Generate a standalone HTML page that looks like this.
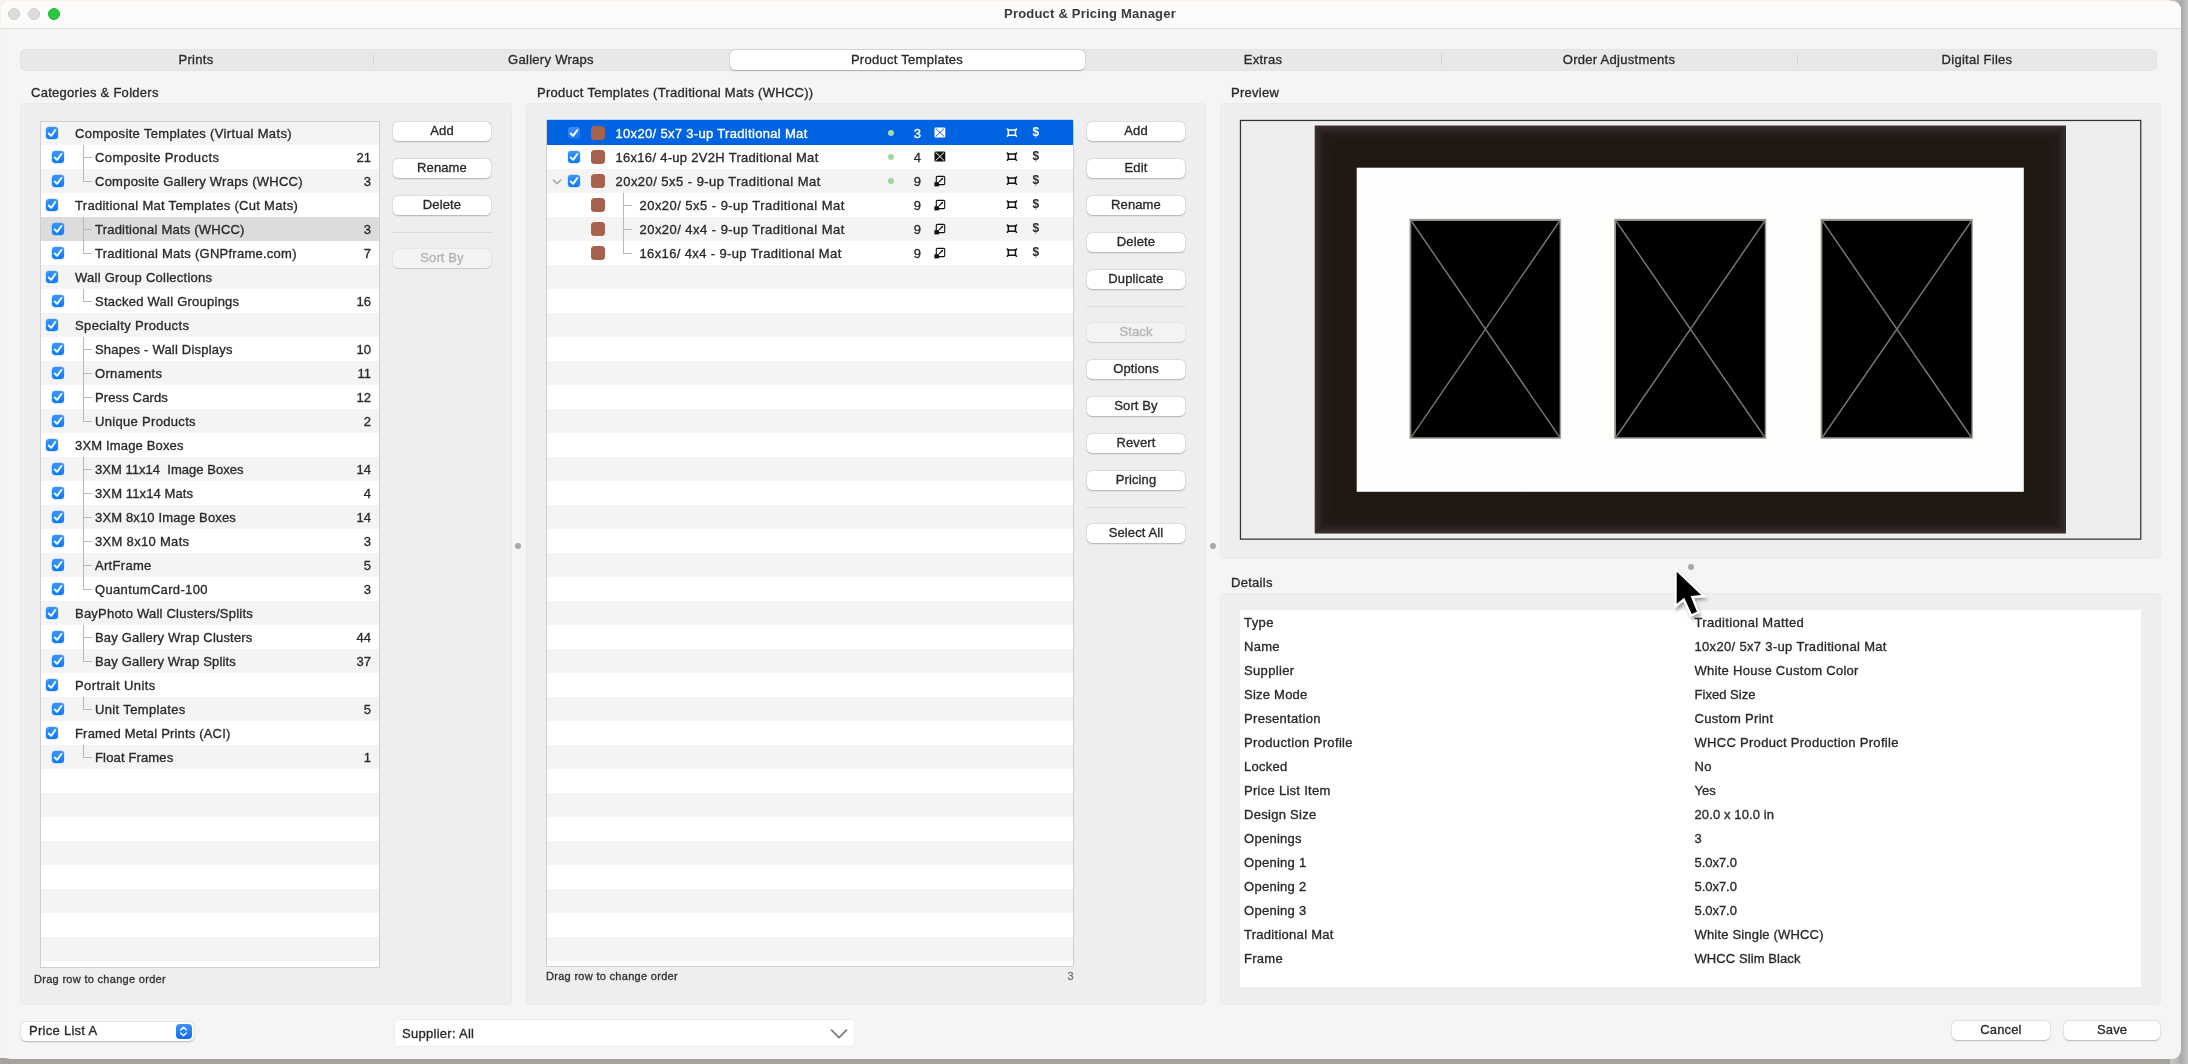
<!DOCTYPE html><html lang="en"><head><meta charset="utf-8"><title>Product &amp; Pricing Manager</title><style>
*{box-sizing:border-box;margin:0;padding:0}
html,body{width:2188px;height:1064px;overflow:hidden}
body{position:relative;background:#a5a19d;font-family:"Liberation Sans","DejaVu Sans",sans-serif;font-size:13px;color:#2a2a2a;letter-spacing:.28px;-webkit-font-smoothing:antialiased;-webkit-text-stroke:.33px currentColor}
.abs{position:absolute}
svg{display:block}
#bgR{left:2170px;top:0;width:18px;height:1064px;background:linear-gradient(90deg,#c9c7c5 0,#bdbcbb 7px,#a8a8a8 11px,#adadad 12px,#c6c6c6 18px)}
#bgT{left:0;top:0;width:2188px;height:12px;background:#faf3ed}
#bgL{left:0;top:0;width:12px;height:1058px;background:#faf1ea}
#win{will-change:transform;left:1px;top:1px;width:2180px;height:1058px;background:#f5f5f5;border-radius:9px;overflow:hidden}
#tbar{left:0;top:0;width:2180px;height:28px;background:linear-gradient(#fdfcfa,#fbfbfa);border-bottom:1px solid #dedede}
.tl{width:12px;height:12px;border-radius:50%;background:#dcdcdc;border:.5px solid #cfcfcf;top:8px}
#title{left:0;top:0;width:2180px;height:27px;line-height:26px;text-align:center;font-weight:700;color:#3a3a3a;letter-spacing:.2px;-webkit-text-stroke:0;padding-left:0}
.t{white-space:nowrap;line-height:16px;height:16px}
.gb{background:#eeeeee;border-radius:5px;box-shadow:0 0 0 .5px #e6e6e6 inset}
.btn{height:19px;border-radius:5px;background:#fff;box-shadow:0 .5px 1.6px rgba(0,0,0,.24),0 0 0 .5px rgba(0,0,0,.05);text-align:center;line-height:18.4px;white-space:nowrap;letter-spacing:.12px}
.btn.dis{background:#f3f3f3;color:#b4b4b4;box-shadow:0 .5px 1px rgba(0,0,0,.14),0 0 0 .5px rgba(0,0,0,.04)}
.sep{height:1px;background:#dcdcdc}
.list{background:#fff;border:1px solid #cfcfcf;overflow:hidden}
.row{left:0;height:24px}
.g{background:#f4f4f4}
.cb{width:12px;height:12px;border-radius:3px;background:linear-gradient(#3a94f8,#0b7bff);box-shadow:0 0 0 .4px rgba(0,90,200,.3)}
.cb svg{position:absolute;left:0;top:0}
.sw{width:14px;height:14px;border-radius:3.5px;background:#a6624d}
.ln{background:#b9b9b9}
.num{text-align:right;letter-spacing:0}
.sm{font-size:11px;letter-spacing:.3px;color:#333}
</style></head><body>
<div class="abs" id="bgT"></div><div class="abs" id="bgL"></div><div class="abs" id="bgR"></div>
<div class="abs" id="win">
<div class="abs" style="left:-1px;top:-1px;width:2188px;height:1064px">
<div class="abs" id="tbar" style="left:1px;top:1px"></div>
<div class="abs tl" style="left:8px"></div><div class="abs tl" style="left:28px"></div><div class="abs tl" style="left:48px;background:#28c840;border-color:#1fb636"></div>
<div class="abs" id="title" style="left:0;top:1px;width:2180px">Product &amp; Pricing Manager</div>
<div class="abs" style="left:20px;top:49px;width:2137px;height:21.5px;background:#e8e8e8;border-radius:6px;box-shadow:0 0 0 .5px #e0e0e0 inset"></div>
<div class="abs" style="left:730px;top:50px;width:354.8px;height:19.5px;background:#fff;border-radius:5px;box-shadow:0 .5px 1.5px rgba(0,0,0,.25),0 0 0 .5px rgba(0,0,0,.05)"></div>
<div class="abs" style="left:373px;top:54px;width:1px;height:11px;background:#d4d4d4"></div>
<div class="abs" style="left:1441px;top:54px;width:1px;height:11px;background:#d4d4d4"></div>
<div class="abs" style="left:1797px;top:54px;width:1px;height:11px;background:#d4d4d4"></div>
<div class="abs t " style="left:46px;top:51.5px;width:300px;text-align:center">Prints</div>
<div class="abs t " style="left:401px;top:51.5px;width:300px;text-align:center">Gallery Wraps</div>
<div class="abs t " style="left:757px;top:51.5px;width:300px;text-align:center">Product Templates</div>
<div class="abs t " style="left:1113px;top:51.5px;width:300px;text-align:center">Extras</div>
<div class="abs t " style="left:1469px;top:51.5px;width:300px;text-align:center">Order Adjustments</div>
<div class="abs t " style="left:1827px;top:51.5px;width:300px;text-align:center">Digital Files</div>
<div class="abs t " style="left:31px;top:85px;">Categories &amp; Folders</div>
<div class="abs t " style="left:537px;top:85px;">Product Templates (Traditional Mats (WHCC))</div>
<div class="abs t " style="left:1231px;top:85px;">Preview</div>
<div class="abs t " style="left:1231px;top:575px;">Details</div>
<div class="abs gb" style="left:20px;top:103px;width:491.5px;height:902px"></div>
<div class="abs gb" style="left:526px;top:103px;width:680px;height:902px"></div>
<div class="abs gb" style="left:1220px;top:103px;width:941px;height:455.5px"></div>
<div class="abs gb" style="left:1220px;top:593px;width:941px;height:412px"></div>
<div class="abs list" style="left:40px;top:120.5px;width:339.5px;height:847px">
<div class="abs row g" style="top:-0.5px;width:339.5px"></div>
<div class="abs row g" style="top:47.5px;width:339.5px"></div>
<div class="abs row g" style="top:95.5px;width:339.5px"></div>
<div class="abs row g" style="top:143.5px;width:339.5px"></div>
<div class="abs row g" style="top:191.5px;width:339.5px"></div>
<div class="abs row g" style="top:239.5px;width:339.5px"></div>
<div class="abs row g" style="top:287.5px;width:339.5px"></div>
<div class="abs row g" style="top:335.5px;width:339.5px"></div>
<div class="abs row g" style="top:383.5px;width:339.5px"></div>
<div class="abs row g" style="top:431.5px;width:339.5px"></div>
<div class="abs row g" style="top:479.5px;width:339.5px"></div>
<div class="abs row g" style="top:527.5px;width:339.5px"></div>
<div class="abs row g" style="top:575.5px;width:339.5px"></div>
<div class="abs row g" style="top:623.5px;width:339.5px"></div>
<div class="abs row g" style="top:671.5px;width:339.5px"></div>
<div class="abs row g" style="top:719.5px;width:339.5px"></div>
<div class="abs row g" style="top:767.5px;width:339.5px"></div>
<div class="abs row g" style="top:815.5px;width:339.5px"></div>
</div>
<div class="abs cb" style="left:46px;top:127px;"><svg width="12" height="12" viewBox="0 0 12 12"><path d="M2.7 6.5 L5.1 8.9 L9.3 3.0" fill="none" stroke="#fff" stroke-width="1.95" stroke-linecap="round" stroke-linejoin="round"/></svg></div>
<div class="abs t " style="left:75px;top:126px;letter-spacing:0.337px;">Composite Templates (Virtual Mats)</div>
<div class="abs cb" style="left:52px;top:151px;"><svg width="12" height="12" viewBox="0 0 12 12"><path d="M2.7 6.5 L5.1 8.9 L9.3 3.0" fill="none" stroke="#fff" stroke-width="1.95" stroke-linecap="round" stroke-linejoin="round"/></svg></div>
<div class="abs ln" style="left:83px;top:145px;width:1px;height:24px"></div>
<div class="abs ln" style="left:83px;top:156.5px;width:9px;height:1px"></div>
<div class="abs t " style="left:95px;top:150px;letter-spacing:0.403px;white-space:pre">Composite Products</div>
<div class="abs t num" style="left:271px;top:150px;width:100px;">21</div>
<div class="abs cb" style="left:52px;top:175px;"><svg width="12" height="12" viewBox="0 0 12 12"><path d="M2.7 6.5 L5.1 8.9 L9.3 3.0" fill="none" stroke="#fff" stroke-width="1.95" stroke-linecap="round" stroke-linejoin="round"/></svg></div>
<div class="abs ln" style="left:83px;top:169px;width:1px;height:12px"></div>
<div class="abs ln" style="left:83px;top:180.5px;width:9px;height:1px"></div>
<div class="abs t " style="left:95px;top:174px;letter-spacing:0.239px;white-space:pre">Composite Gallery Wraps (WHCC)</div>
<div class="abs t num" style="left:271px;top:174px;width:100px;">3</div>
<div class="abs cb" style="left:46px;top:199px;"><svg width="12" height="12" viewBox="0 0 12 12"><path d="M2.7 6.5 L5.1 8.9 L9.3 3.0" fill="none" stroke="#fff" stroke-width="1.95" stroke-linecap="round" stroke-linejoin="round"/></svg></div>
<div class="abs t " style="left:75px;top:198px;letter-spacing:0.296px;">Traditional Mat Templates (Cut Mats)</div>
<div class="abs" style="left:41px;top:216.5px;width:338px;height:24px;background:#dcdcdc"></div>
<div class="abs cb" style="left:52px;top:223px;"><svg width="12" height="12" viewBox="0 0 12 12"><path d="M2.7 6.5 L5.1 8.9 L9.3 3.0" fill="none" stroke="#fff" stroke-width="1.95" stroke-linecap="round" stroke-linejoin="round"/></svg></div>
<div class="abs ln" style="left:83px;top:217px;width:1px;height:24px"></div>
<div class="abs ln" style="left:83px;top:228.5px;width:9px;height:1px"></div>
<div class="abs t " style="left:95px;top:222px;letter-spacing:0.214px;white-space:pre">Traditional Mats (WHCC)</div>
<div class="abs t num" style="left:271px;top:222px;width:100px;">3</div>
<div class="abs cb" style="left:52px;top:247px;"><svg width="12" height="12" viewBox="0 0 12 12"><path d="M2.7 6.5 L5.1 8.9 L9.3 3.0" fill="none" stroke="#fff" stroke-width="1.95" stroke-linecap="round" stroke-linejoin="round"/></svg></div>
<div class="abs ln" style="left:83px;top:241px;width:1px;height:12px"></div>
<div class="abs ln" style="left:83px;top:252.5px;width:9px;height:1px"></div>
<div class="abs t " style="left:95px;top:246px;letter-spacing:0.255px;white-space:pre">Traditional Mats (GNPframe.com)</div>
<div class="abs t num" style="left:271px;top:246px;width:100px;">7</div>
<div class="abs cb" style="left:46px;top:271px;"><svg width="12" height="12" viewBox="0 0 12 12"><path d="M2.7 6.5 L5.1 8.9 L9.3 3.0" fill="none" stroke="#fff" stroke-width="1.95" stroke-linecap="round" stroke-linejoin="round"/></svg></div>
<div class="abs t " style="left:75px;top:270px;letter-spacing:0.251px;">Wall Group Collections</div>
<div class="abs cb" style="left:52px;top:295px;"><svg width="12" height="12" viewBox="0 0 12 12"><path d="M2.7 6.5 L5.1 8.9 L9.3 3.0" fill="none" stroke="#fff" stroke-width="1.95" stroke-linecap="round" stroke-linejoin="round"/></svg></div>
<div class="abs ln" style="left:83px;top:289px;width:1px;height:12px"></div>
<div class="abs ln" style="left:83px;top:300.5px;width:9px;height:1px"></div>
<div class="abs t " style="left:95px;top:294px;letter-spacing:0.244px;white-space:pre">Stacked Wall Groupings</div>
<div class="abs t num" style="left:271px;top:294px;width:100px;">16</div>
<div class="abs cb" style="left:46px;top:319px;"><svg width="12" height="12" viewBox="0 0 12 12"><path d="M2.7 6.5 L5.1 8.9 L9.3 3.0" fill="none" stroke="#fff" stroke-width="1.95" stroke-linecap="round" stroke-linejoin="round"/></svg></div>
<div class="abs t " style="left:75px;top:318px;letter-spacing:0.367px;">Specialty Products</div>
<div class="abs cb" style="left:52px;top:343px;"><svg width="12" height="12" viewBox="0 0 12 12"><path d="M2.7 6.5 L5.1 8.9 L9.3 3.0" fill="none" stroke="#fff" stroke-width="1.95" stroke-linecap="round" stroke-linejoin="round"/></svg></div>
<div class="abs ln" style="left:83px;top:337px;width:1px;height:24px"></div>
<div class="abs ln" style="left:83px;top:348.5px;width:9px;height:1px"></div>
<div class="abs t " style="left:95px;top:342px;letter-spacing:0.201px;white-space:pre">Shapes - Wall Displays</div>
<div class="abs t num" style="left:271px;top:342px;width:100px;">10</div>
<div class="abs cb" style="left:52px;top:367px;"><svg width="12" height="12" viewBox="0 0 12 12"><path d="M2.7 6.5 L5.1 8.9 L9.3 3.0" fill="none" stroke="#fff" stroke-width="1.95" stroke-linecap="round" stroke-linejoin="round"/></svg></div>
<div class="abs ln" style="left:83px;top:361px;width:1px;height:24px"></div>
<div class="abs ln" style="left:83px;top:372.5px;width:9px;height:1px"></div>
<div class="abs t " style="left:95px;top:366px;letter-spacing:0.325px;white-space:pre">Ornaments</div>
<div class="abs t num" style="left:271px;top:366px;width:100px;">11</div>
<div class="abs cb" style="left:52px;top:391px;"><svg width="12" height="12" viewBox="0 0 12 12"><path d="M2.7 6.5 L5.1 8.9 L9.3 3.0" fill="none" stroke="#fff" stroke-width="1.95" stroke-linecap="round" stroke-linejoin="round"/></svg></div>
<div class="abs ln" style="left:83px;top:385px;width:1px;height:24px"></div>
<div class="abs ln" style="left:83px;top:396.5px;width:9px;height:1px"></div>
<div class="abs t " style="left:95px;top:390px;letter-spacing:0.128px;white-space:pre">Press Cards</div>
<div class="abs t num" style="left:271px;top:390px;width:100px;">12</div>
<div class="abs cb" style="left:52px;top:415px;"><svg width="12" height="12" viewBox="0 0 12 12"><path d="M2.7 6.5 L5.1 8.9 L9.3 3.0" fill="none" stroke="#fff" stroke-width="1.95" stroke-linecap="round" stroke-linejoin="round"/></svg></div>
<div class="abs ln" style="left:83px;top:409px;width:1px;height:12px"></div>
<div class="abs ln" style="left:83px;top:420.5px;width:9px;height:1px"></div>
<div class="abs t " style="left:95px;top:414px;letter-spacing:0.321px;white-space:pre">Unique Products</div>
<div class="abs t num" style="left:271px;top:414px;width:100px;">2</div>
<div class="abs cb" style="left:46px;top:439px;"><svg width="12" height="12" viewBox="0 0 12 12"><path d="M2.7 6.5 L5.1 8.9 L9.3 3.0" fill="none" stroke="#fff" stroke-width="1.95" stroke-linecap="round" stroke-linejoin="round"/></svg></div>
<div class="abs t " style="left:75px;top:438px;letter-spacing:0.163px;">3XM Image Boxes</div>
<div class="abs cb" style="left:52px;top:463px;"><svg width="12" height="12" viewBox="0 0 12 12"><path d="M2.7 6.5 L5.1 8.9 L9.3 3.0" fill="none" stroke="#fff" stroke-width="1.95" stroke-linecap="round" stroke-linejoin="round"/></svg></div>
<div class="abs ln" style="left:83px;top:457px;width:1px;height:24px"></div>
<div class="abs ln" style="left:83px;top:468.5px;width:9px;height:1px"></div>
<div class="abs t " style="left:95px;top:462px;letter-spacing:0.029px;white-space:pre">3XM 11x14  Image Boxes</div>
<div class="abs t num" style="left:271px;top:462px;width:100px;">14</div>
<div class="abs cb" style="left:52px;top:487px;"><svg width="12" height="12" viewBox="0 0 12 12"><path d="M2.7 6.5 L5.1 8.9 L9.3 3.0" fill="none" stroke="#fff" stroke-width="1.95" stroke-linecap="round" stroke-linejoin="round"/></svg></div>
<div class="abs ln" style="left:83px;top:481px;width:1px;height:24px"></div>
<div class="abs ln" style="left:83px;top:492.5px;width:9px;height:1px"></div>
<div class="abs t " style="left:95px;top:486px;letter-spacing:0.117px;white-space:pre">3XM 11x14 Mats</div>
<div class="abs t num" style="left:271px;top:486px;width:100px;">4</div>
<div class="abs cb" style="left:52px;top:511px;"><svg width="12" height="12" viewBox="0 0 12 12"><path d="M2.7 6.5 L5.1 8.9 L9.3 3.0" fill="none" stroke="#fff" stroke-width="1.95" stroke-linecap="round" stroke-linejoin="round"/></svg></div>
<div class="abs ln" style="left:83px;top:505px;width:1px;height:24px"></div>
<div class="abs ln" style="left:83px;top:516.5px;width:9px;height:1px"></div>
<div class="abs t " style="left:95px;top:510px;letter-spacing:0.146px;white-space:pre">3XM 8x10 Image Boxes</div>
<div class="abs t num" style="left:271px;top:510px;width:100px;">14</div>
<div class="abs cb" style="left:52px;top:535px;"><svg width="12" height="12" viewBox="0 0 12 12"><path d="M2.7 6.5 L5.1 8.9 L9.3 3.0" fill="none" stroke="#fff" stroke-width="1.95" stroke-linecap="round" stroke-linejoin="round"/></svg></div>
<div class="abs ln" style="left:83px;top:529px;width:1px;height:24px"></div>
<div class="abs ln" style="left:83px;top:540.5px;width:9px;height:1px"></div>
<div class="abs t " style="left:95px;top:534px;letter-spacing:0.315px;white-space:pre">3XM 8x10 Mats</div>
<div class="abs t num" style="left:271px;top:534px;width:100px;">3</div>
<div class="abs cb" style="left:52px;top:559px;"><svg width="12" height="12" viewBox="0 0 12 12"><path d="M2.7 6.5 L5.1 8.9 L9.3 3.0" fill="none" stroke="#fff" stroke-width="1.95" stroke-linecap="round" stroke-linejoin="round"/></svg></div>
<div class="abs ln" style="left:83px;top:553px;width:1px;height:24px"></div>
<div class="abs ln" style="left:83px;top:564.5px;width:9px;height:1px"></div>
<div class="abs t " style="left:95px;top:558px;letter-spacing:0.304px;white-space:pre">ArtFrame</div>
<div class="abs t num" style="left:271px;top:558px;width:100px;">5</div>
<div class="abs cb" style="left:52px;top:583px;"><svg width="12" height="12" viewBox="0 0 12 12"><path d="M2.7 6.5 L5.1 8.9 L9.3 3.0" fill="none" stroke="#fff" stroke-width="1.95" stroke-linecap="round" stroke-linejoin="round"/></svg></div>
<div class="abs ln" style="left:83px;top:577px;width:1px;height:12px"></div>
<div class="abs ln" style="left:83px;top:588.5px;width:9px;height:1px"></div>
<div class="abs t " style="left:95px;top:582px;letter-spacing:0.345px;white-space:pre">QuantumCard-100</div>
<div class="abs t num" style="left:271px;top:582px;width:100px;">3</div>
<div class="abs cb" style="left:46px;top:607px;"><svg width="12" height="12" viewBox="0 0 12 12"><path d="M2.7 6.5 L5.1 8.9 L9.3 3.0" fill="none" stroke="#fff" stroke-width="1.95" stroke-linecap="round" stroke-linejoin="round"/></svg></div>
<div class="abs t " style="left:75px;top:606px;letter-spacing:0.223px;">BayPhoto Wall Clusters/Splits</div>
<div class="abs cb" style="left:52px;top:631px;"><svg width="12" height="12" viewBox="0 0 12 12"><path d="M2.7 6.5 L5.1 8.9 L9.3 3.0" fill="none" stroke="#fff" stroke-width="1.95" stroke-linecap="round" stroke-linejoin="round"/></svg></div>
<div class="abs ln" style="left:83px;top:625px;width:1px;height:24px"></div>
<div class="abs ln" style="left:83px;top:636.5px;width:9px;height:1px"></div>
<div class="abs t " style="left:95px;top:630px;letter-spacing:0.183px;white-space:pre">Bay Gallery Wrap Clusters</div>
<div class="abs t num" style="left:271px;top:630px;width:100px;">44</div>
<div class="abs cb" style="left:52px;top:655px;"><svg width="12" height="12" viewBox="0 0 12 12"><path d="M2.7 6.5 L5.1 8.9 L9.3 3.0" fill="none" stroke="#fff" stroke-width="1.95" stroke-linecap="round" stroke-linejoin="round"/></svg></div>
<div class="abs ln" style="left:83px;top:649px;width:1px;height:12px"></div>
<div class="abs ln" style="left:83px;top:660.5px;width:9px;height:1px"></div>
<div class="abs t " style="left:95px;top:654px;letter-spacing:0.172px;white-space:pre">Bay Gallery Wrap Splits</div>
<div class="abs t num" style="left:271px;top:654px;width:100px;">37</div>
<div class="abs cb" style="left:46px;top:679px;"><svg width="12" height="12" viewBox="0 0 12 12"><path d="M2.7 6.5 L5.1 8.9 L9.3 3.0" fill="none" stroke="#fff" stroke-width="1.95" stroke-linecap="round" stroke-linejoin="round"/></svg></div>
<div class="abs t " style="left:75px;top:678px;letter-spacing:0.390px;">Portrait Units</div>
<div class="abs cb" style="left:52px;top:703px;"><svg width="12" height="12" viewBox="0 0 12 12"><path d="M2.7 6.5 L5.1 8.9 L9.3 3.0" fill="none" stroke="#fff" stroke-width="1.95" stroke-linecap="round" stroke-linejoin="round"/></svg></div>
<div class="abs ln" style="left:83px;top:697px;width:1px;height:12px"></div>
<div class="abs ln" style="left:83px;top:708.5px;width:9px;height:1px"></div>
<div class="abs t " style="left:95px;top:702px;letter-spacing:0.355px;white-space:pre">Unit Templates</div>
<div class="abs t num" style="left:271px;top:702px;width:100px;">5</div>
<div class="abs cb" style="left:46px;top:727px;"><svg width="12" height="12" viewBox="0 0 12 12"><path d="M2.7 6.5 L5.1 8.9 L9.3 3.0" fill="none" stroke="#fff" stroke-width="1.95" stroke-linecap="round" stroke-linejoin="round"/></svg></div>
<div class="abs t " style="left:75px;top:726px;letter-spacing:0.180px;">Framed Metal Prints (ACI)</div>
<div class="abs cb" style="left:52px;top:751px;"><svg width="12" height="12" viewBox="0 0 12 12"><path d="M2.7 6.5 L5.1 8.9 L9.3 3.0" fill="none" stroke="#fff" stroke-width="1.95" stroke-linecap="round" stroke-linejoin="round"/></svg></div>
<div class="abs ln" style="left:83px;top:745px;width:1px;height:12px"></div>
<div class="abs ln" style="left:83px;top:756.5px;width:9px;height:1px"></div>
<div class="abs t " style="left:95px;top:750px;letter-spacing:0.148px;white-space:pre">Float Frames</div>
<div class="abs t num" style="left:271px;top:750px;width:100px;">1</div>
<div class="abs t sm" style="left:34px;top:971px;">Drag row to change order</div>
<div class="abs btn" style="left:393px;top:121.5px;width:98px">Add</div>
<div class="abs btn" style="left:393px;top:158.5px;width:98px">Rename</div>
<div class="abs btn" style="left:393px;top:195.5px;width:98px">Delete</div>
<div class="abs sep" style="left:392px;top:232px;width:100px"></div>
<div class="abs btn dis" style="left:393px;top:248.5px;width:98px">Sort By</div>
<div class="abs list" style="left:546px;top:120.5px;width:527.5px;height:846.5px">
<div class="abs row g" style="top:-0.5px;width:527.5px"></div>
<div class="abs row g" style="top:47.5px;width:527.5px"></div>
<div class="abs row g" style="top:95.5px;width:527.5px"></div>
<div class="abs row g" style="top:143.5px;width:527.5px"></div>
<div class="abs row g" style="top:191.5px;width:527.5px"></div>
<div class="abs row g" style="top:239.5px;width:527.5px"></div>
<div class="abs row g" style="top:287.5px;width:527.5px"></div>
<div class="abs row g" style="top:335.5px;width:527.5px"></div>
<div class="abs row g" style="top:383.5px;width:527.5px"></div>
<div class="abs row g" style="top:431.5px;width:527.5px"></div>
<div class="abs row g" style="top:479.5px;width:527.5px"></div>
<div class="abs row g" style="top:527.5px;width:527.5px"></div>
<div class="abs row g" style="top:575.5px;width:527.5px"></div>
<div class="abs row g" style="top:623.5px;width:527.5px"></div>
<div class="abs row g" style="top:671.5px;width:527.5px"></div>
<div class="abs row g" style="top:719.5px;width:527.5px"></div>
<div class="abs row g" style="top:767.5px;width:527.5px"></div>
<div class="abs row g" style="top:815.5px;width:527.5px"></div>
</div>
<div class="abs" style="left:547px;top:120px;width:526px;height:25px;background:#0063e1;box-shadow:0 -.5px 0 #8fc0ff"></div>
<div class="abs cb" style="left:568px;top:127px;background:linear-gradient(#3d8cff,#1a73f5);box-shadow:none;"><svg width="12" height="12" viewBox="0 0 12 12"><path d="M2.7 6.5 L5.1 8.9 L9.3 3.0" fill="none" stroke="#fff" stroke-width="1.95" stroke-linecap="round" stroke-linejoin="round"/></svg></div>
<div class="abs sw" style="left:591px;top:126px"></div>
<div class="abs t " style="left:615.5px;top:126px;letter-spacing:0.322px;color:#fff;">10x20/ 5x7 3-up Traditional Mat</div>
<div class="abs" style="left:888px;top:130px;width:6px;height:6px;border-radius:50%;background:#a6dba6"></div>
<div class="abs t num" style="left:867px;top:126px;width:54px;color:#fff;">3</div>
<div class="abs" style="left:934px;top:127.4px;width:12px;height:11px"><svg width="12" height="11" viewBox="0 0 12 11"><rect x=".5" y=".4" width="10.8" height="10.2" rx="1.2" fill="#fff"/><path d="M1.6 1.4 L10.2 9.6 M10.2 1.4 L1.6 9.6" stroke="#0063e1" stroke-width="1" fill="none"/></svg></div>
<div class="abs" style="left:1006px;top:128.4px;width:12px;height:10px"><svg width="12" height="10" viewBox="0 0 12 10"><rect x="2.35" y="2.05" width="7.1" height="5.2" fill="none" stroke="#fff" stroke-width="1.5"/><path d="M1.3 1.1 L2.4 2.1 M10.5 1.1 L9.4 2.1 M1.3 8.2 L2.4 7.2 M10.5 8.2 L9.4 7.2" stroke="#fff" stroke-width="1.5" stroke-linecap="round"/></svg></div>
<div class="abs t " style="left:1032.4px;top:124px;color:#fff;font-weight:700;font-size:12px;letter-spacing:0;-webkit-text-stroke:0">$</div>
<div class="abs cb" style="left:568px;top:151px;"><svg width="12" height="12" viewBox="0 0 12 12"><path d="M2.7 6.5 L5.1 8.9 L9.3 3.0" fill="none" stroke="#fff" stroke-width="1.95" stroke-linecap="round" stroke-linejoin="round"/></svg></div>
<div class="abs sw" style="left:591px;top:150px"></div>
<div class="abs t " style="left:615.5px;top:150px;letter-spacing:0.293px;">16x16/ 4-up 2V2H Traditional Mat</div>
<div class="abs" style="left:888px;top:154px;width:6px;height:6px;border-radius:50%;background:#a3d6a3"></div>
<div class="abs t num" style="left:867px;top:150px;width:54px;">4</div>
<div class="abs" style="left:934px;top:151.4px;width:12px;height:11px"><svg width="12" height="11" viewBox="0 0 12 11"><rect x=".5" y=".4" width="10.8" height="10.2" rx="1.2" fill="#111"/><path d="M1.6 1.4 L10.2 9.6 M10.2 1.4 L1.6 9.6" stroke="#fff" stroke-width="1" fill="none"/></svg></div>
<div class="abs" style="left:1006px;top:152.4px;width:12px;height:10px"><svg width="12" height="10" viewBox="0 0 12 10"><rect x="2.35" y="2.05" width="7.1" height="5.2" fill="none" stroke="#111" stroke-width="1.5"/><path d="M1.3 1.1 L2.4 2.1 M10.5 1.1 L9.4 2.1 M1.3 8.2 L2.4 7.2 M10.5 8.2 L9.4 7.2" stroke="#111" stroke-width="1.5" stroke-linecap="round"/></svg></div>
<div class="abs t " style="left:1032.4px;top:148px;font-weight:700;font-size:12px;letter-spacing:0;-webkit-text-stroke:0">$</div>
<div class="abs cb" style="left:568px;top:175px;"><svg width="12" height="12" viewBox="0 0 12 12"><path d="M2.7 6.5 L5.1 8.9 L9.3 3.0" fill="none" stroke="#fff" stroke-width="1.95" stroke-linecap="round" stroke-linejoin="round"/></svg></div>
<div class="abs sw" style="left:591px;top:174px"></div>
<div class="abs t " style="left:615.5px;top:174px;letter-spacing:0.460px;">20x20/ 5x5 - 9-up Traditional Mat</div>
<div class="abs" style="left:888px;top:178px;width:6px;height:6px;border-radius:50%;background:#a3d6a3"></div>
<div class="abs t num" style="left:867px;top:174px;width:54px;">9</div>
<div class="abs" style="left:934px;top:174.9px;width:12px;height:12px"><svg width="12" height="12" viewBox="0 0 12 12"><rect x="2.3" y="1.4" width="8.4" height="8.2" rx="1" fill="none" stroke="#111" stroke-width="1.1"/><rect x=".4" y="7.2" width="4.6" height="4.2" fill="#111"/><path d="M5 7 L8.2 3.8" stroke="#111" stroke-width="1.1"/><circle cx="8.3" cy="3.7" r=".9" fill="#111"/></svg></div>
<div class="abs" style="left:1006px;top:176.4px;width:12px;height:10px"><svg width="12" height="10" viewBox="0 0 12 10"><rect x="2.35" y="2.05" width="7.1" height="5.2" fill="none" stroke="#111" stroke-width="1.5"/><path d="M1.3 1.1 L2.4 2.1 M10.5 1.1 L9.4 2.1 M1.3 8.2 L2.4 7.2 M10.5 8.2 L9.4 7.2" stroke="#111" stroke-width="1.5" stroke-linecap="round"/></svg></div>
<div class="abs t " style="left:1032.4px;top:172px;font-weight:700;font-size:12px;letter-spacing:0;-webkit-text-stroke:0">$</div>
<div class="abs sw" style="left:591px;top:198px"></div>
<div class="abs ln" style="left:623px;top:193px;width:1px;height:24px"></div>
<div class="abs ln" style="left:623px;top:204.5px;width:9px;height:1px"></div>
<div class="abs t " style="left:639.5px;top:198px;letter-spacing:0.460px;">20x20/ 5x5 - 9-up Traditional Mat</div>
<div class="abs t num" style="left:867px;top:198px;width:54px;">9</div>
<div class="abs" style="left:934px;top:198.9px;width:12px;height:12px"><svg width="12" height="12" viewBox="0 0 12 12"><rect x="2.3" y="1.4" width="8.4" height="8.2" rx="1" fill="none" stroke="#111" stroke-width="1.1"/><rect x=".4" y="7.2" width="4.6" height="4.2" fill="#111"/><path d="M5 7 L8.2 3.8" stroke="#111" stroke-width="1.1"/><circle cx="8.3" cy="3.7" r=".9" fill="#111"/></svg></div>
<div class="abs" style="left:1006px;top:200.4px;width:12px;height:10px"><svg width="12" height="10" viewBox="0 0 12 10"><rect x="2.35" y="2.05" width="7.1" height="5.2" fill="none" stroke="#111" stroke-width="1.5"/><path d="M1.3 1.1 L2.4 2.1 M10.5 1.1 L9.4 2.1 M1.3 8.2 L2.4 7.2 M10.5 8.2 L9.4 7.2" stroke="#111" stroke-width="1.5" stroke-linecap="round"/></svg></div>
<div class="abs t " style="left:1032.4px;top:196px;font-weight:700;font-size:12px;letter-spacing:0;-webkit-text-stroke:0">$</div>
<div class="abs sw" style="left:591px;top:222px"></div>
<div class="abs ln" style="left:623px;top:217px;width:1px;height:24px"></div>
<div class="abs ln" style="left:623px;top:228.5px;width:9px;height:1px"></div>
<div class="abs t " style="left:639.5px;top:222px;letter-spacing:0.460px;">20x20/ 4x4 - 9-up Traditional Mat</div>
<div class="abs t num" style="left:867px;top:222px;width:54px;">9</div>
<div class="abs" style="left:934px;top:222.9px;width:12px;height:12px"><svg width="12" height="12" viewBox="0 0 12 12"><rect x="2.3" y="1.4" width="8.4" height="8.2" rx="1" fill="none" stroke="#111" stroke-width="1.1"/><rect x=".4" y="7.2" width="4.6" height="4.2" fill="#111"/><path d="M5 7 L8.2 3.8" stroke="#111" stroke-width="1.1"/><circle cx="8.3" cy="3.7" r=".9" fill="#111"/></svg></div>
<div class="abs" style="left:1006px;top:224.4px;width:12px;height:10px"><svg width="12" height="10" viewBox="0 0 12 10"><rect x="2.35" y="2.05" width="7.1" height="5.2" fill="none" stroke="#111" stroke-width="1.5"/><path d="M1.3 1.1 L2.4 2.1 M10.5 1.1 L9.4 2.1 M1.3 8.2 L2.4 7.2 M10.5 8.2 L9.4 7.2" stroke="#111" stroke-width="1.5" stroke-linecap="round"/></svg></div>
<div class="abs t " style="left:1032.4px;top:220px;font-weight:700;font-size:12px;letter-spacing:0;-webkit-text-stroke:0">$</div>
<div class="abs sw" style="left:591px;top:246px"></div>
<div class="abs ln" style="left:623px;top:241px;width:1px;height:12px"></div>
<div class="abs ln" style="left:623px;top:252.5px;width:9px;height:1px"></div>
<div class="abs t " style="left:639.5px;top:246px;letter-spacing:0.366px;">16x16/ 4x4 - 9-up Traditional Mat</div>
<div class="abs t num" style="left:867px;top:246px;width:54px;">9</div>
<div class="abs" style="left:934px;top:246.9px;width:12px;height:12px"><svg width="12" height="12" viewBox="0 0 12 12"><rect x="2.3" y="1.4" width="8.4" height="8.2" rx="1" fill="none" stroke="#111" stroke-width="1.1"/><rect x=".4" y="7.2" width="4.6" height="4.2" fill="#111"/><path d="M5 7 L8.2 3.8" stroke="#111" stroke-width="1.1"/><circle cx="8.3" cy="3.7" r=".9" fill="#111"/></svg></div>
<div class="abs" style="left:1006px;top:248.4px;width:12px;height:10px"><svg width="12" height="10" viewBox="0 0 12 10"><rect x="2.35" y="2.05" width="7.1" height="5.2" fill="none" stroke="#111" stroke-width="1.5"/><path d="M1.3 1.1 L2.4 2.1 M10.5 1.1 L9.4 2.1 M1.3 8.2 L2.4 7.2 M10.5 8.2 L9.4 7.2" stroke="#111" stroke-width="1.5" stroke-linecap="round"/></svg></div>
<div class="abs t " style="left:1032.4px;top:244px;font-weight:700;font-size:12px;letter-spacing:0;-webkit-text-stroke:0">$</div>
<svg class="abs" style="left:551.5px;top:177.6px" width="10" height="8" viewBox="0 0 10 8"><path d="M1.3 2 L5 5.8 L8.7 2" fill="none" stroke="#a4a4a4" stroke-width="1.5" stroke-linecap="round" stroke-linejoin="round"/></svg>
<div class="abs t sm" style="left:546px;top:968px;">Drag row to change order</div>
<div class="abs t sm num" style="left:1023px;top:968px;width:51px;color:#777">3</div>
<div class="abs btn" style="left:1087px;top:121.5px;width:98px">Add</div>
<div class="abs btn" style="left:1087px;top:158.5px;width:98px">Edit</div>
<div class="abs btn" style="left:1087px;top:195.5px;width:98px">Rename</div>
<div class="abs btn" style="left:1087px;top:232.5px;width:98px">Delete</div>
<div class="abs btn" style="left:1087px;top:269.5px;width:98px">Duplicate</div>
<div class="abs sep" style="left:1086px;top:306px;width:100px"></div>
<div class="abs btn dis" style="left:1087px;top:322.5px;width:98px">Stack</div>
<div class="abs btn" style="left:1087px;top:359.5px;width:98px">Options</div>
<div class="abs btn" style="left:1087px;top:396.5px;width:98px">Sort By</div>
<div class="abs btn" style="left:1087px;top:433.5px;width:98px">Revert</div>
<div class="abs btn" style="left:1087px;top:470.5px;width:98px">Pricing</div>
<div class="abs sep" style="left:1086px;top:507px;width:100px"></div>
<div class="abs btn" style="left:1087px;top:523.5px;width:98px">Select All</div>
<div class="abs" style="left:515px;top:542.5px;width:6px;height:6px;border-radius:50%;background:#a9a9a9"></div>
<div class="abs" style="left:1210px;top:542.5px;width:6px;height:6px;border-radius:50%;background:#a9a9a9"></div>
<div class="abs" style="left:1687.6px;top:564px;width:6px;height:6px;border-radius:50%;background:#a9a9a9"></div>
<svg class="abs" style="left:1238px;top:118px" width="906" height="424" viewBox="1238 118 906 424"><rect x="1240.45" y="120.45" width="900.3" height="418.7" fill="#eeeeee" stroke="#333" stroke-width="1.25"/></svg>
<svg class="abs" style="left:1314px;top:125px" width="753" height="410" viewBox="1314 125 753 410"><defs><linearGradient id="gl" gradientUnits="userSpaceOnUse" x1="1314.7" y1="0" x2="1357" y2="0"><stop offset="0" stop-color="#3d3232"/><stop offset=".05" stop-color="#332a29"/><stop offset=".22" stop-color="#231b18"/><stop offset=".45" stop-color="#1e1712"/><stop offset="1" stop-color="#1f1813"/></linearGradient><linearGradient id="gr" gradientUnits="userSpaceOnUse" x1="2066" y1="0" x2="2023.5" y2="0"><stop offset="0" stop-color="#3d3232"/><stop offset=".05" stop-color="#332a29"/><stop offset=".22" stop-color="#231b18"/><stop offset=".45" stop-color="#1e1712"/><stop offset="1" stop-color="#1f1813"/></linearGradient><linearGradient id="gt" gradientUnits="userSpaceOnUse" x1="0" y1="125.6" x2="0" y2="168"><stop offset="0" stop-color="#3d3232"/><stop offset=".05" stop-color="#332a29"/><stop offset=".22" stop-color="#231b18"/><stop offset=".45" stop-color="#1e1712"/><stop offset="1" stop-color="#1f1813"/></linearGradient><linearGradient id="gb" gradientUnits="userSpaceOnUse" x1="0" y1="533.6" x2="0" y2="491.5"><stop offset="0" stop-color="#3d3232"/><stop offset=".05" stop-color="#332a29"/><stop offset=".22" stop-color="#231b18"/><stop offset=".45" stop-color="#1e1712"/><stop offset="1" stop-color="#1f1813"/></linearGradient><linearGradient id="bv" x1="0" y1="0" x2="0" y2="1"><stop offset="0" stop-color="#a9a9a2"/><stop offset="1" stop-color="#d8d8d2"/></linearGradient></defs><rect x="1315.2" y="126.1" width="750.3" height="407.0" fill="#2a2120"/><polygon points="1314.7,125.6 2066,125.6 2023.5,168 1357,168" fill="url(#gt)"/><polygon points="1314.7,533.6 2066,533.6 2023.5,491.5 1357,491.5" fill="url(#gb)"/><polygon points="1314.7,125.6 1357,168 1357,491.5 1314.7,533.6" fill="url(#gl)"/><polygon points="2066,125.6 2023.5,168 2023.5,491.5 2066,533.6" fill="url(#gr)"/><rect x="1356.7" y="167.7" width="667.1" height="324.1" fill="#fdfdfb"/><rect x="1409.3" y="218.7" width="151.9" height="220.3" fill="#c4c4be"/><rect x="1409.8999999999999" y="219.29999999999998" width="150.7" height="219.1" fill="#8e8e88"/><rect x="1411.3" y="221.0" width="148.3" height="216.2" fill="#000"/><path d="M1411.3 221.0 L1559.6 437.2 M1559.6 221.0 L1411.3 437.2" stroke="#747474" stroke-width="1.5"/><rect x="1614" y="218.7" width="152.4" height="220.3" fill="#c4c4be"/><rect x="1614.6" y="219.29999999999998" width="151.2" height="219.1" fill="#8e8e88"/><rect x="1616.0" y="221.0" width="148.8" height="216.2" fill="#000"/><path d="M1616.0 221.0 L1764.8 437.2 M1764.8 221.0 L1616.0 437.2" stroke="#747474" stroke-width="1.5"/><rect x="1820.4" y="218.7" width="152.6" height="220.3" fill="#c4c4be"/><rect x="1821.0" y="219.29999999999998" width="151.4" height="219.1" fill="#8e8e88"/><rect x="1822.4" y="221.0" width="149.0" height="216.2" fill="#000"/><path d="M1822.4 221.0 L1971.4 437.2 M1971.4 221.0 L1822.4 437.2" stroke="#747474" stroke-width="1.5"/></svg>
<div class="abs" style="left:1240px;top:610px;width:901px;height:376.5px;background:#fff"></div>
<div class="abs t " style="left:1244px;top:615px;letter-spacing:0.405px;">Type</div>
<div class="abs t " style="left:1694.5px;top:615px;letter-spacing:0.337px;">Traditional Matted</div>
<div class="abs t " style="left:1244px;top:639px;letter-spacing:0.274px;">Name</div>
<div class="abs t " style="left:1694.5px;top:639px;letter-spacing:0.329px;">10x20/ 5x7 3-up Traditional Mat</div>
<div class="abs t " style="left:1244px;top:663px;letter-spacing:0.343px;">Supplier</div>
<div class="abs t " style="left:1694.5px;top:663px;letter-spacing:0.278px;">White House Custom Color</div>
<div class="abs t " style="left:1244px;top:687px;letter-spacing:0.235px;">Size Mode</div>
<div class="abs t " style="left:1694.5px;top:687px;letter-spacing:0.023px;">Fixed Size</div>
<div class="abs t " style="left:1244px;top:711px;letter-spacing:0.319px;">Presentation</div>
<div class="abs t " style="left:1694.5px;top:711px;letter-spacing:0.306px;">Custom Print</div>
<div class="abs t " style="left:1244px;top:735px;letter-spacing:0.352px;">Production Profile</div>
<div class="abs t " style="left:1694.5px;top:735px;letter-spacing:0.294px;">WHCC Product Production Profile</div>
<div class="abs t " style="left:1244px;top:759px;">Locked</div>
<div class="abs t " style="left:1694.5px;top:759px;letter-spacing:0.382px;">No</div>
<div class="abs t " style="left:1244px;top:783px;">Price List Item</div>
<div class="abs t " style="left:1694.5px;top:783px;letter-spacing:0.046px;">Yes</div>
<div class="abs t " style="left:1244px;top:807px;">Design Size</div>
<div class="abs t " style="left:1694.5px;top:807px;letter-spacing:0.119px;">20.0 x 10.0 in</div>
<div class="abs t " style="left:1244px;top:831px;">Openings</div>
<div class="abs t " style="left:1694.5px;top:831px;">3</div>
<div class="abs t " style="left:1244px;top:855px;">Opening 1</div>
<div class="abs t " style="left:1694.5px;top:855px;letter-spacing:-0.041px;">5.0x7.0</div>
<div class="abs t " style="left:1244px;top:879px;">Opening 2</div>
<div class="abs t " style="left:1694.5px;top:879px;letter-spacing:-0.041px;">5.0x7.0</div>
<div class="abs t " style="left:1244px;top:903px;">Opening 3</div>
<div class="abs t " style="left:1694.5px;top:903px;letter-spacing:-0.041px;">5.0x7.0</div>
<div class="abs t " style="left:1244px;top:927px;">Traditional Mat</div>
<div class="abs t " style="left:1694.5px;top:927px;letter-spacing:0.184px;">White Single (WHCC)</div>
<div class="abs t " style="left:1244px;top:951px;">Frame</div>
<div class="abs t " style="left:1694.5px;top:951px;letter-spacing:0.084px;">WHCC Slim Black</div>
<div class="abs btn" style="left:21px;top:1021.5px;width:173px;height:19.5px;text-align:left;padding-left:8px;line-height:18px;letter-spacing:.28px">Price List A</div>
<div class="abs" style="left:176px;top:1023.8px;width:16px;height:15.5px;border-radius:4px;background:linear-gradient(#3f92fb,#0f6df2)"><svg width="15" height="15" viewBox="0 0 15 15"><path d="M4.6 6 L7.5 3.2 L10.4 6 M4.6 9 L7.5 11.8 L10.4 9" fill="none" stroke="#fff" stroke-width="1.4" stroke-linecap="round" stroke-linejoin="round"/></svg></div>
<div class="abs" style="left:395px;top:1020px;width:458.5px;height:26px;background:#fff;border-radius:3px;box-shadow:0 0 0 .5px #e4e4e4"></div>
<div class="abs t " style="left:402px;top:1026px;">Supplier: All</div>
<svg class="abs" style="left:830px;top:1028px" width="18" height="12" viewBox="0 0 18 12"><path d="M1.6 2.2 L9 9.6 L16.4 2.2" fill="none" stroke="#7e7e7e" stroke-width="1.9" stroke-linecap="round" stroke-linejoin="round"/></svg>
<div class="abs btn" style="left:1952px;top:1021px;width:97.8px">Cancel</div>
<div class="abs btn" style="left:2064px;top:1021px;width:96.3px">Save</div>
<svg class="abs" style="left:1660px;top:555px;overflow:visible" width="60" height="75" viewBox="1660 555 60 75"><defs><filter id="cs" x="-30%" y="-30%" width="170%" height="170%"><feGaussianBlur stdDeviation="1.6"/></filter></defs><path d="M1676.7 571.8 L1676.7 603.8 L1684.2 597.7 L1691.7 613.9 L1697 611.7 L1690.6 595.9 L1701.1 595.1 Z" transform="translate(1.5,3)" fill="#000" fill-opacity=".3" stroke="#000" stroke-opacity=".25" stroke-width="5" stroke-linejoin="miter" filter="url(#cs)"/><path d="M1676.7 571.8 L1676.7 603.8 L1684.2 597.7 L1691.7 613.9 L1697 611.7 L1690.6 595.9 L1701.1 595.1 Z" fill="#000" stroke="#fff" stroke-width="5" stroke-linejoin="miter" stroke-miterlimit="6"/><path d="M1676.7 571.8 L1676.7 603.8 L1684.2 597.7 L1691.7 613.9 L1697 611.7 L1690.6 595.9 L1701.1 595.1 Z" fill="#000"/></svg>
</div></div></body></html>
